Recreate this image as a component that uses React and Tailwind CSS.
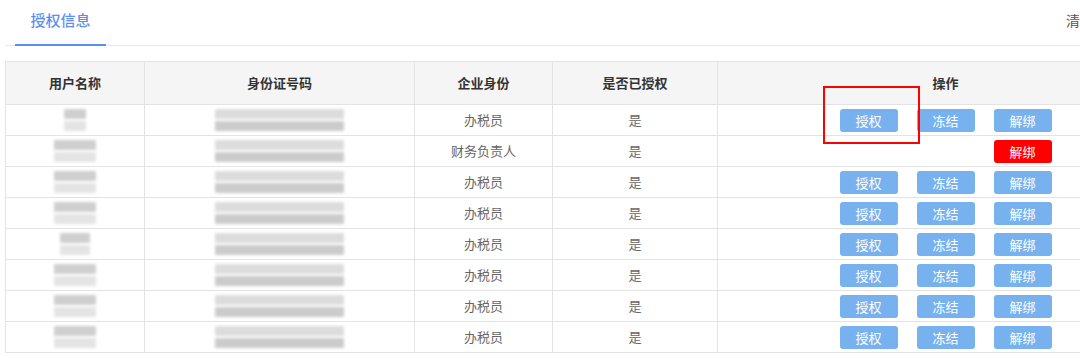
import React from 'react';

// Authorisation info table: blurred user/id columns, role, status and actions.
const rows = [
  { role: '办税员', nameW: 'w-[22px]', only: false },
  { role: '财务负责人', nameW: 'w-[42px]', only: true },
  { role: '办税员', nameW: 'w-[42px]', only: false },
  { role: '办税员', nameW: 'w-[42px]', only: false },
  { role: '办税员', nameW: 'w-[30px]', only: false },
  { role: '办税员', nameW: 'w-[42px]', only: false },
  { role: '办税员', nameW: 'w-[42px]', only: false },
  { role: '办税员', nameW: 'w-[42px]', only: false },
];

function ActionButton({ label, danger, hidden }) {
  return (
    <button
      className={
        'w-[58px] h-[23px] rounded-[3px] text-[13px] leading-[23px] text-white ' +
        (danger ? 'bg-[#ff0000] ' : 'bg-[#78b2ee] ') +
        (hidden ? 'invisible' : '')
      }
    >
      {label}
    </button>
  );
}

function Blur({ className }) {
  return <div className={'mx-auto rounded-[1px] blur-[1.5px] ' + className} />;
}

export default function App() {
  return (
    <div
      className="relative w-[1080px] h-[358px] overflow-hidden bg-white"
      style={{ fontFamily: '"Noto Sans CJK SC", "Noto Sans", sans-serif' }}
    >
      <div className="w-[1200px] pl-[5px]">
        <div className="flex items-end h-[46px] border-b border-[#e8e8e8]">
          <div className="ml-[10px] w-[91px] h-[46px] flex items-center justify-center border-b-2 border-[#5b8ef2] -mb-px">
            <span className="text-[15px] text-[#5b8ef2] font-medium -mt-[4px]">授权信息</span>
          </div>
          <div className="ml-[960px] h-[46px] flex items-center">
            <span className="text-[14px] text-[#555] -mt-[4px]">清空</span>
          </div>
        </div>

        <table className="mt-[15px] border-collapse table-fixed text-[13px]">
          <colgroup>
            <col className="w-[139px]" />
            <col className="w-[270px]" />
            <col className="w-[138px]" />
            <col className="w-[165px]" />
            <col className="w-[456px]" />
          </colgroup>
          <thead>
            <tr className="h-[43px] bg-[#f5f5f5]">
              {['用户名称', '身份证号码', '企业身份', '是否已授权', '操作'].map((h) => (
                <th key={h} className="border border-[#e3e3e3] font-bold text-[#333] text-center">
                  {h}
                </th>
              ))}
            </tr>
          </thead>
          <tbody>
            {rows.map((r, i) => (
              <tr key={i} className="h-[31px]">
                <td className="border border-[#e3e3e3] p-0">
                  <div className="flex flex-col gap-[2px]">
                    <Blur className={r.nameW + ' h-[10px] bg-[#cfcfcf]'} />
                    <Blur className={r.nameW + ' h-[10px] bg-[#e4e4e4]'} />
                  </div>
                </td>
                <td className="border border-[#e3e3e3] p-0">
                  <div className="flex flex-col gap-[2px]">
                    <Blur className="w-[129px] h-[10px] bg-[#dcdcdc]" />
                    <Blur className="w-[129px] h-[10px] bg-[#cbcbcb]" />
                  </div>
                </td>
                <td className="border border-[#e3e3e3] text-center text-[#666]">{r.role}</td>
                <td className="border border-[#e3e3e3] text-center text-[#666]">是</td>
                <td className="border border-[#e3e3e3] p-0">
                  <div className="flex justify-center gap-[19px]">
                    <ActionButton label="授权" hidden={r.only} />
                    <ActionButton label="冻结" hidden={r.only} />
                    <ActionButton label="解绑" danger={r.only} />
                  </div>
                </td>
              </tr>
            ))}
          </tbody>
        </table>
      </div>

      {/* red highlight box around the first 授权 button */}
      <div className="absolute left-[823px] top-[86px] w-[97px] h-[58px] border-2 border-[#ff0000]" />
    </div>
  );
}
